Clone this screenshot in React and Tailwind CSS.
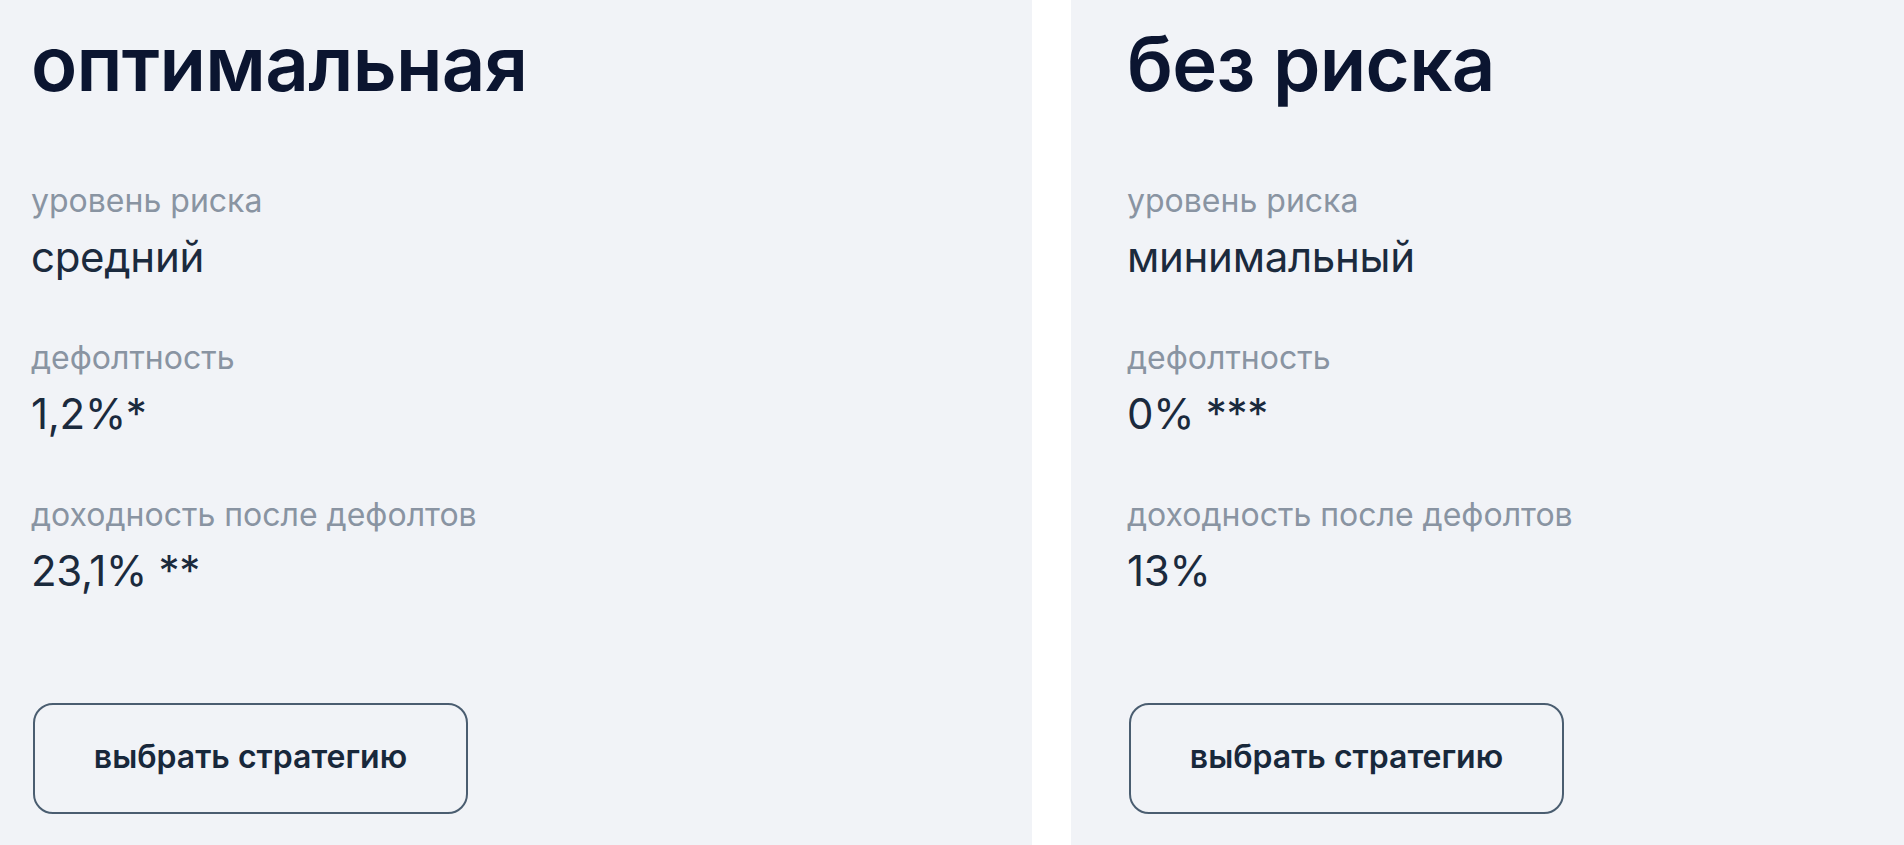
import React from 'react';

const strategies = [
  {
    title: 'оптимальная',
    rows: [
      { label: 'уровень риска', value: 'средний' },
      { label: 'дефолтность', value: '1,2%*' },
      { label: 'доходность после дефолтов', value: '23,1% **' },
    ],
  },
  {
    title: 'без риска',
    rows: [
      { label: 'уровень риска', value: 'минимальный' },
      { label: 'дефолтность', value: '0% ***' },
      { label: 'доходность после дефолтов', value: '13%' },
    ],
  },
];

function Card({ title, rows, first }) {
  return (
    <div className={`h-full bg-[#f1f3f7] pt-[25px] ${first ? 'w-[1032px] pl-[31px]' : 'flex-1 pl-[56px]'}`}>
      <h2 className="text-[76px] leading-[76px] font-semibold text-[#0b1530] tracking-[-0.7px]">{title}</h2>
      <div className="mt-[82px] flex flex-col gap-[59px]">
        {rows.map((row, i) => (
          <div key={i} className="flex flex-col gap-[14px]">
            <div className="text-[32px] leading-[36px] text-[#8994a2]">{row.label}</div>
            <div className="text-[42px] leading-[48px] text-[#1b2a3d] tracking-[-0.3px]">{row.value}</div>
          </div>
        ))}
      </div>
      <button className="mt-[108px] ml-[2px] w-[435px] h-[111px] pb-[4px] rounded-[20px] border-2 border-[#4a5d70] text-[32px] font-semibold text-[#18283b] flex items-center justify-center">
        выбрать стратегию
      </button>
    </div>
  );
}

export default function App() {
  return (
    <main className="w-full h-[845px] overflow-hidden bg-white flex gap-[39px] font-['Inter',sans-serif]">
      {strategies.map((s, i) => (
        <Card key={i} title={s.title} rows={s.rows} first={i === 0} />
      ))}
    </main>
  );
}
